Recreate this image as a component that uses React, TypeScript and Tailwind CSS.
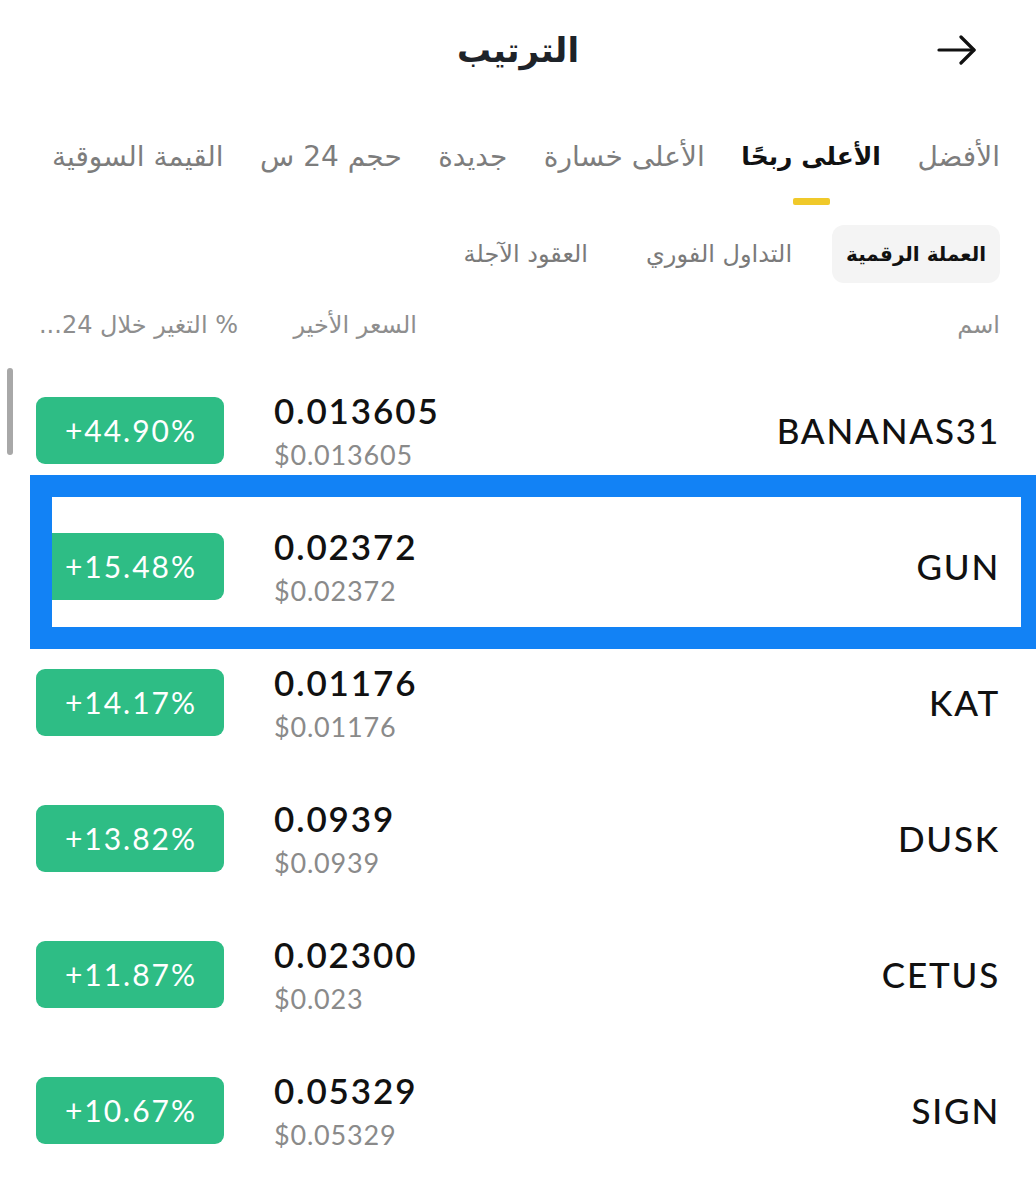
const ARABIC = { fontFamily: '"DejaVu Sans", "Noto Sans", sans-serif' };
const LATIN = { fontFamily: 'Lato, "Liberation Sans", sans-serif' };

interface Coin {
  name: string;
  price: string;
  usd: string;
  change: string;
}

const coins: Coin[] = [
  { name: 'BANANAS31', price: '0.013605', usd: '$0.013605', change: '+44.90%' },
  { name: 'GUN', price: '0.02372', usd: '$0.02372', change: '+15.48%' },
  { name: 'KAT', price: '0.01176', usd: '$0.01176', change: '+14.17%' },
  { name: 'DUSK', price: '0.0939', usd: '$0.0939', change: '+13.82%' },
  { name: 'CETUS', price: '0.02300', usd: '$0.023', change: '+11.87%' },
  { name: 'SIGN', price: '0.05329', usd: '$0.05329', change: '+10.67%' },
];

const tabs = ['الأفضل', 'الأعلى ربحًا', 'الأعلى خسارة', 'جديدة', 'حجم 24 س', 'القيمة السوقية'];
const markets = ['العملة الرقمية', 'التداول الفوري', 'العقود الآجلة'];

function BackArrow() {
  return (
    <svg width="40" height="30" viewBox="0 0 40 30" fill="none" stroke="#111" strokeWidth="3.2" strokeLinecap="round" strokeLinejoin="round">
      <path d="M2 15H37" />
      <path d="M24 2L37 15L24 28" />
    </svg>
  );
}

function CoinRow({ coin }: { coin: Coin }) {
  return (
    <div dir="ltr" className="flex h-[136px] items-center pl-[36px] pr-[36px]" style={LATIN}>
      <div className="flex h-[67px] w-[188px] items-center justify-center rounded-[9px] bg-[#2ebd85] pl-[2px] text-[30px] tracking-[2px] text-white">
        {coin.change}
      </div>
      <div className="ml-[50px] flex flex-col pt-[4px]">
        <span className="text-[35px] font-semibold leading-[46px] tracking-[1.9px] text-[#111]">{coin.price}</span>
        <span className="text-[27px] leading-[44px] tracking-[0.8px] text-[#8a8a8a]">{coin.usd}</span>
      </div>
      <div className="flex-1" />
      <span className="text-[35px] font-medium tracking-[1.8px] text-[#111]">{coin.name}</span>
    </div>
  );
}

export default function App() {
  return (
    <div dir="rtl" className="relative min-h-[1200px] w-[1036px] overflow-hidden bg-white">
      <header className="grid h-[100px] grid-cols-[1fr_auto_1fr] items-center">
        <div className="mr-[59px] flex justify-start">
          <BackArrow />
        </div>
        <h1 className="text-[34px] font-bold text-[#1e2329]" style={ARABIC}>
          الترتيب
        </h1>
        <div />
      </header>

      <nav className="mt-[37px] flex justify-between pl-[52px] pr-[36px]" style={ARABIC}>
        {tabs.map((t, i) => (
          <div key={t} className="flex flex-col items-center">
            <span
              className={
                i === 1
                  ? 'text-[25px] font-bold leading-[40px] text-[#111]'
                  : 'text-[28px] leading-[40px] text-[#7d7d7d]'
              }
            >
              {t}
            </span>
            {i === 1 ? (
              <span className="mt-[21px] h-[7px] w-[37px] rounded-[2px] bg-[#f0c92a]" />
            ) : (
              <span className="mt-[21px] h-[7px]" />
            )}
          </div>
        ))}
      </nav>

      <div className="mt-[20px] flex gap-[22px] pr-[36px]" style={ARABIC}>
        {markets.map((m, i) => (
          <div
            key={m}
            className={
              i === 0
                ? 'flex h-[58px] items-center rounded-[12px] bg-[#f4f4f4] px-[14px] text-[20px] font-bold text-[#111]'
                : 'flex h-[58px] items-center px-[18px] text-[24px] text-[#7a7a7a]'
            }
          >
            {m}
          </div>
        ))}
      </div>

      <div dir="ltr" className="flex h-[79px] items-center pl-[36px] pr-[36px] pt-[4px] text-[24px] text-[#8e8e8e]" style={ARABIC}>
        <span dir="rtl" className="w-[202px] whitespace-nowrap text-right">% التغير خلال 24...</span>
        <span dir="rtl" className="ml-[50px] w-[129px] whitespace-nowrap text-right">السعر الأخير</span>
        <div className="flex-1" />
        <span dir="rtl">اسم</span>
      </div>

      <div className="relative">
        <div className="absolute left-[7px] top-[6px] h-[87px] w-[6px] rounded-full bg-[#a8a8a8]" />
        {coins.map((c) => (
          <CoinRow key={c.name} coin={c} />
        ))}
      </div>

      <div className="pointer-events-none absolute left-[30px] top-[475px] h-[174px] w-[1013px] border-[22px] border-[#1282f5]" />
    </div>
  );
}
